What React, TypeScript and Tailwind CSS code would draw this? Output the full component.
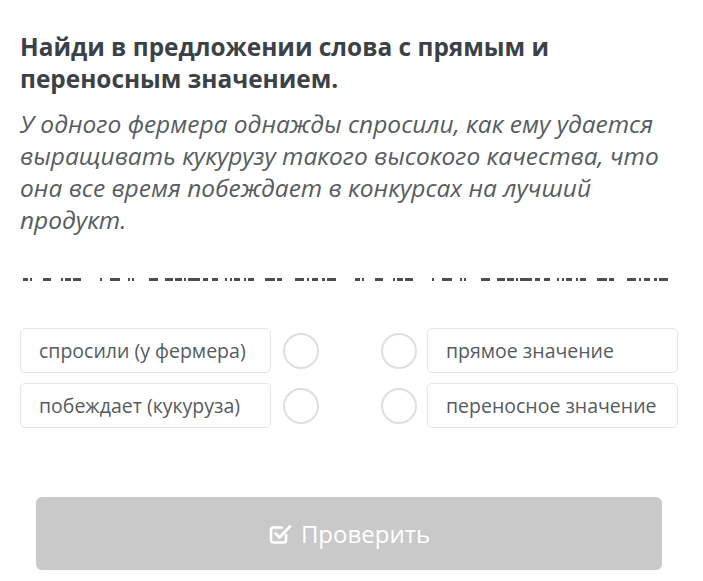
const font = { fontFamily: '"Open Sans", "Noto Sans", sans-serif' };

// dash segments [start, end] of the first half of the blank line, page x
const half = [
  [23, 28], [30, 32], [43, 51], [61, 63], [65, 71], [73, 81], [100, 102], [110, 120],
  [128, 130], [132, 134], [149, 158], [165, 173], [175, 182], [184, 186], [188, 200],
  [203, 208], [212, 218], [225, 227], [230, 232], [234, 240], [244, 246], [248, 254],
  [265, 275], [277, 282], [295, 304], [307, 309], [312, 318], [322, 325], [327, 336],
];

function BlankLine() {
  const rects = [0, 332].flatMap((offset) =>
    half.map(([a, b]) => ({ x: a + offset - 20, w: b - a })),
  );
  return (
    <svg width="660" height="6" viewBox="0 0 660 6" className="block">
      {rects.map((r, i) => (
        <rect key={i} x={r.x} y={1} width={r.w} height={3} fill="#4a4f54" />
      ))}
    </svg>
  );
}

function Circle() {
  return <div className="w-[36px] h-[36px] rounded-full border-2 border-[#dcdfe1] bg-white shrink-0" />;
}

function Box({ text }: { text: string }) {
  return (
    <div className="w-[251px] h-[45px] flex items-center pl-[18px] rounded-[5px] border border-[#e2e6e8] bg-white text-[19.5px] text-[#555b60] shrink-0">
      {text}
    </div>
  );
}

function CheckSquare() {
  return (
    <svg width="24" height="24" viewBox="0 0 24 24" fill="none" stroke="#ffffff" strokeWidth="2.6" strokeLinecap="round" strokeLinejoin="round">
      <path d="M18 13v5a2.5 2.5 0 0 1-2.5 2.5h-10A2.5 2.5 0 0 1 3 18V8a2.5 2.5 0 0 1 2.5-2.5H14" />
      <path d="M7.5 11.5l4 4L22 4.5" />
    </svg>
  );
}

export default function App() {
  return (
    <div className="w-[703px] h-[581px] bg-white pl-5 pr-[25px] pt-[31px]" style={font}>
      <h1 className="text-[24.4px] leading-[32px] font-bold text-[#3b4146] whitespace-nowrap">
        Найди в предложении слова с прямым и
        <br />
        переносным значением.
      </h1>
      <p className="mt-[13px] text-[24.5px] leading-[32px] italic text-[#575c61] whitespace-nowrap">
        У одного фермера однажды спросили, как ему удается
        <br />
        выращивать кукурузу такого высокого качества, что
        <br />
        она все время побеждает в конкурсах на лучший
        <br />
        продукт.
      </p>
      <div className="mt-[41px]">
        <BlankLine />
      </div>
      <div className="mt-[45px] flex flex-col gap-[10px]">
        {[
          ["спросили (у фермера)", "прямое значение"],
          ["побеждает (кукуруза)", "переносное значение"],
        ].map(([l, r]) => (
          <div key={l} className="flex items-center justify-between">
            <div className="flex items-center gap-[12px]">
              <Box text={l} />
              <Circle />
            </div>
            <div className="flex items-center gap-[10px]">
              <Circle />
              <Box text={r} />
            </div>
          </div>
        ))}
      </div>
      <div className="mt-[69px] mx-4 h-[73px] rounded-[6px] bg-[#c9c9c9] flex items-center justify-center gap-[9px] text-[24px] text-white">
        <CheckSquare />
        <span>Проверить</span>
      </div>
    </div>
  );
}
